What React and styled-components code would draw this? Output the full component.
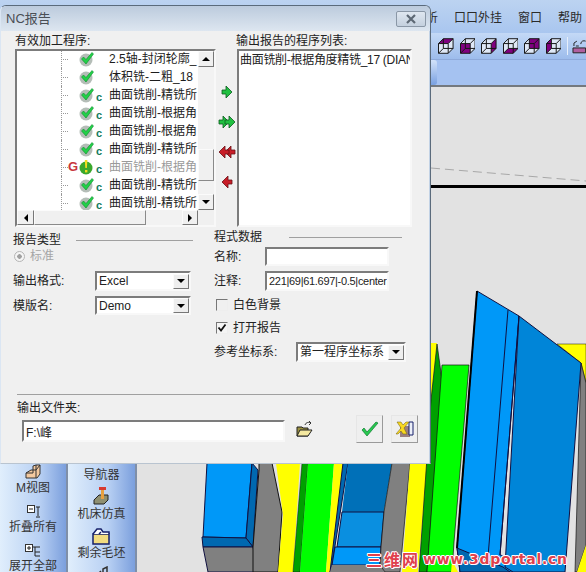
import styled, { createGlobalStyle } from "styled-components";

const GlobalStyle = createGlobalStyle`
  html, body { margin: 0; padding: 0; background: #e2e2e2; }
  * { box-sizing: border-box; }
`;

const FONT = `"Liberation Sans", "Noto Sans CJK SC", sans-serif`;

const Page = styled.div`
  position: relative;
  width: 586px;
  height: 572px;
  overflow: hidden;
  display: flex;
  flex-direction: column;
  font: 12px/16px ${FONT};
  color: #222;
`;

/* main window behind the dialog */
const MenuBar = styled.div`
  height: 33px;
  flex: none;
  display: flex;
  gap: 16px;
  padding: 10px 0 0 426px;
  color: #2a2a2a;
  background: linear-gradient(#bcd3f1, #a9c6ef);
`;

const MenuItem = styled.span`
  white-space: nowrap;
`;

const ToolBar = styled.div`
  height: 27px;
  flex: none;
  display: flex;
  align-items: center;
  gap: 6px;
  padding-left: 438px;
  background: linear-gradient(#c4d9f6, #9dbcec);
  border-bottom: 1px solid #8eaadb;
`;

const ToolSep = styled.div`
  width: 1px;
  height: 18px;
  background: #e6eefa;
  margin-right: -2px;
`;

const Band = styled.div`
  height: 27px;
  flex: none;
  padding-left: 431px;
  background: #a5c2f1;
  border-bottom: 2px solid #74797f;
`;

const BandButton = styled.div`
  width: 6px;
  height: 25px;
  border-radius: 0 3px 3px 0;
  background: linear-gradient(#d3e3fa, #79a0e0);
`;

const Workspace = styled.div`
  flex: 1;
  min-height: 0;
  display: flex;
`;

const SideColumn = styled.div`
  width: ${(p) => p.$w}px;
  flex: none;
  display: flex;
  flex-direction: column;
  align-items: center;
  overflow: hidden;
  padding-top: ${(p) => p.$top}px;
  background: linear-gradient(90deg, #e0eefc, #b8d0f3 60%, #7b9fdd);
  border-right: 2px solid #7f8fa8;
`;

const SideItem = styled.div`
  flex: none;
  height: 39px;
  display: flex;
  flex-direction: column;
  align-items: center;
  justify-content: flex-end;
  line-height: 15px;
  color: #333;
  white-space: nowrap;
  svg { margin-bottom: 1px; flex: none; }
`;

const PartialIcon = styled.svg`
  flex: none;
  margin-top: 5px;
`;

const Scene = styled.svg`
  flex: 1;
  min-width: 0;
  height: 100%;
  display: block;
  background: #e2e2e2;
`;

const Watermark = styled.div`
  position: absolute;
  left: 366px;
  top: 550px;
  display: flex;
  align-items: center;
  gap: 3px;
  white-space: nowrap;
  font: bold 14px/18px "DejaVu Sans", sans-serif;
  letter-spacing: 0.7px;
  color: #e0404c;
  text-shadow: 1px 0 #fff, -1px 0 #fff, 0 1px #fff, 0 -1px #fff, 1px 1px #fde, -1px -1px #fde;
`;

const WatermarkCjk = styled.span`
  font: bold 16px/18px "Noto Sans CJK SC", sans-serif;
  letter-spacing: 2px;
`;

/* dialog */
const Dialog = styled.div`
  position: absolute;
  left: 0;
  top: 5px;
  width: 431px;
  height: 459px;
  display: flex;
  flex-direction: column;
  background: #f0f0f0;
  border: 1px solid #5b6b7c;
  border-left-color: #dbe6f3;
  border-bottom-color: #b9c4d0;
  border-radius: 6px 6px 0 0;
  box-shadow: inset -1px 0 #c3d3e6;
`;

const TitleBar = styled.div`
  height: 25px;
  flex: none;
  display: flex;
  align-items: center;
  justify-content: space-between;
  padding: 0 4px 0 5px;
  font-size: 13px;
  color: #4a4f55;
  border-radius: 5px 5px 0 0;
  background: linear-gradient(#bccbdd, #dde6f0);
`;

const CloseButton = styled.div`
  width: 30px;
  height: 16px;
  display: flex;
  align-items: center;
  justify-content: center;
  border: 1px solid #8a97a6;
  border-radius: 2px;
  background: linear-gradient(#dfe7f0, #c4d0de);
`;

const ListsRow = styled.div`
  display: flex;
  padding: 2px 0 0 14px;
`;

const ListColumn = styled.div`
  width: ${(p) => p.$w}px;
  flex: none;
`;

const FieldLabel = styled.div`
  height: 16px;
  margin-left: ${(p) => p.$ml || 0}px;
  white-space: nowrap;
  overflow: hidden;
`;

const Inset = styled.div`
  border: 2px solid;
  border-color: #7c7c7c #f8f8f8 #f8f8f8 #7c7c7c;
  background: #fff;
`;

const TreeBox = styled(Inset)`
  height: 178px;
  display: grid;
  grid-template-columns: 1fr 16px;
  grid-template-rows: 159px 15px;
`;

const TreeRows = styled.div`
  overflow: hidden;
  padding-left: 44px;
`;

const TreeRow = styled.div`
  height: 18px;
  display: flex;
  align-items: center;
  white-space: nowrap;
  color: ${(p) => (p.$muted ? "#9a9a9a" : "#1c1c1c")};
  &:first-child { margin-top: -1px; }
`;

const Branch = styled.span`
  flex: none;
  width: 7px;
  height: 18px;
  position: relative;
  border-left: 1px dotted #999;
  &::after {
    content: "";
    position: absolute;
    left: 1px;
    top: 9px;
    width: 5px;
    border-top: 1px dotted #999;
  }
`;

const GSlot = styled.span`
  flex: none;
  width: 11px;
  font: bold 13px/16px "Liberation Sans", sans-serif;
  color: #c8363c;
`;

const StateSlot = styled.span`
  flex: none;
  width: 17px;
  height: 16px;
  display: flex;
`;

const CSlot = styled.span`
  flex: none;
  width: 13px;
  padding-top: 4px;
  font: bold 11px/12px "Liberation Sans", sans-serif;
  color: #0f7a5c;
`;

const ScrollColumn = styled.div`
  display: flex;
  flex-direction: column;
  background: #f2f2f2;
`;

const ScrollRow = styled.div`
  display: flex;
  background: #f2f2f2;
`;

const ScrollButton = styled.div`
  flex: none;
  width: ${(p) => p.$w || 16}px;
  height: ${(p) => p.$h || 16}px;
  display: flex;
  align-items: center;
  justify-content: center;
  background: #f0f0f0;
  border: 1px solid;
  border-color: #fbfbfb #777 #777 #fbfbfb;
`;

const ScrollThumb = styled.div`
  flex: none;
  width: ${(p) => p.$w || 16}px;
  height: ${(p) => p.$h || 15}px;
  margin-top: ${(p) => p.$top || 0}px;
  background: #f0f0f0;
  border: 1px solid;
  border-color: #fbfbfb #8a8a8a #8a8a8a #fbfbfb;
`;

const ScrollFill = styled.div`
  flex: 1;
`;

const Corner = styled.div`
  background: #f0f0f0;
`;

const Glyph = styled.span`
  width: 0;
  height: 0;
  border: 4px solid transparent;
  ${(p) => p.$dir === "up" && "border-bottom-color: #000; border-top-width: 0;"}
  ${(p) => p.$dir === "down" && "border-top-color: #000; border-bottom-width: 0;"}
  ${(p) => p.$dir === "left" && "border-right-color: #000; border-left-width: 0;"}
  ${(p) => p.$dir === "right" && "border-left-color: #000; border-right-width: 0;"}
`;

const ArrowColumn = styled.div`
  width: 21px;
  flex: none;
  display: flex;
  flex-direction: column;
  align-items: center;
  gap: 16px;
  padding-top: 52px;
`;

const ListText = styled.div`
  padding: 1px 0 0 1px;
  letter-spacing: -0.3px;
  white-space: nowrap;
`;

const OutputBox = styled(Inset)`
  height: 178px;
  overflow: hidden;
`;

const Panes = styled.div`
  display: flex;
  height: 167px;
  flex: none;
  padding-left: 12px;
`;

const LeftPane = styled.div`
  width: 201px;
  flex: none;
  display: flex;
  flex-direction: column;
  padding-top: 5px;
`;

const RightPane = styled.div`
  width: 192px;
  flex: none;
  display: flex;
  flex-direction: column;
  padding-top: 2px;
`;

const Heading = styled.div`
  display: flex;
  align-items: center;
  gap: ${(p) => p.$gap}px;
  height: 16px;
  margin-bottom: ${(p) => p.$mb || 0}px;
  white-space: nowrap;
`;

const Rule = styled.div`
  flex: 0 0 ${(p) => p.$w}px;
  height: 1px;
  background: #a0a0a0;
`;

const RadioRow = styled.div`
  display: flex;
  align-items: center;
  gap: 5px;
  height: 16px;
  margin: 0 0 7px 1px;
  color: #a6a6a6;
`;

const Radio = styled.span`
  width: 11px;
  height: 11px;
  border-radius: 50%;
  border: 1px solid #b5b5b5;
  background: radial-gradient(circle, #a0a0a0 0 2px, #f4f4f4 2.5px);
`;

const FormRow = styled.div`
  display: flex;
  align-items: center;
  height: ${(p) => p.$h}px;
  margin-bottom: ${(p) => p.$mb || 0}px;
  white-space: nowrap;
`;

const RowLabel = styled.span`
  flex: none;
  width: ${(p) => p.$w}px;
`;

const SelectBox = styled(Inset)`
  width: ${(p) => p.$w}px;
  height: ${(p) => p.$h || 20}px;
  display: flex;
  align-items: center;
  justify-content: space-between;
  padding-left: 2px;
  overflow: hidden;
`;

const SelectArrow = styled.div`
  flex: none;
  width: 16px;
  height: 15px;
  display: flex;
  align-items: center;
  justify-content: center;
  background: #eee;
  border: 1px solid;
  border-color: #fbfbfb #777 #777 #fbfbfb;
`;

const TextInput = styled.input`
  flex: none;
  width: ${(p) => p.$w}px;
  height: ${(p) => p.$h}px;
  margin-left: ${(p) => p.$ml || 0}px;
  padding: 0 0 0 2px;
  font: ${(p) => (p.$small ? 11 : 12)}px ${FONT};
  letter-spacing: ${(p) => (p.$small ? "-0.3px" : 0)};
  color: #222;
  background: #fff;
  outline: none;
  border: 2px solid;
  border-color: #7c7c7c #f8f8f8 #f8f8f8 #7c7c7c;
`;

const CheckRow = styled.div`
  display: flex;
  align-items: center;
  gap: 5px;
  height: 16px;
  margin: 0 0 ${(p) => p.$mb}px 2px;
`;

const CheckBox = styled.span`
  width: 12px;
  height: 12px;
  display: flex;
  background: ${(p) => (p.$on ? "#f4f4f4" : "#f0f0f0")};
  border: 1px solid;
  border-color: #777 #eee #eee #777;
`;

const Footer = styled.div`
  margin: 0 20px 0 16px;
  padding-top: 5px;
  border-top: 1px solid #a0a0a0;
`;

const FolderRow = styled.div`
  display: flex;
  align-items: flex-start;
  margin-top: 4px;
`;

const FolderIconWrap = styled.div`
  width: 71px;
  padding: 1px 0 0 11px;
  flex: none;
`;

const ActionButton = styled.div`
  flex: none;
  width: 27px;
  height: 28px;
  margin: -5px 8px 0 0;
  display: flex;
  align-items: center;
  justify-content: center;
  background: #efefef;
  border: 1px solid;
  border-color: #e6e6e6 #9a9a9a #9a9a9a #e6e6e6;
`;

const CUBE_FACES = {
  top: "M.5 5.500L5.500.5h10l-5 5z",
  front: "M.5 5.500h10v10H.5z",
  right: "M10.500 5.500l5-5v10l-5 5z",
  bottom: "M.5 15.500l5-5h10l-5 5z",
  back: "M5.500.5h10v10h-10z",
  left: "M.5 5.500L5.500.5v10l-5 5z",
};

function Cube({ face }) {
  return (
    <svg width="16" height="16" viewBox="0 0 16 16">
      <path d="M.5 5.500L5.500.5h10v10l-5 5H.5z" fill="#dfe8f6" />
      <path d={CUBE_FACES[face]} fill="#800080" />
      <path
        d="M.5 5.500L5.500.5h10v10l-5 5H.5zM.5 5.500h10v10M10.500 5.500l5-5M5.500.5v10h10M5.500 10.500l-5 5"
        fill="none"
        stroke="#151515"
      />
    </svg>
  );
}

function CheckMark() {
  return (
    <svg width="16" height="16" viewBox="0 0 16 16">
      <circle cx="7" cy="9" r="6.500" fill="#b4bdb7" />
      <path d="M2.500 8l2-2 2.500 2.500L13 1.500l1.500 1.500L7 13z" fill="#22d048" stroke="#0d8a2c" strokeWidth=".6" />
    </svg>
  );
}

function WarnMark() {
  return (
    <svg width="16" height="16" viewBox="0 0 16 16">
      <circle cx="7" cy="9" r="6.500" fill="#3aa82c" />
      <path d="M5.800 1h2.600l-.5 8H6.300z" fill="#f2dc20" />
      <rect x="6" y="11" width="2.400" height="2.400" fill="#f2dc20" />
    </svg>
  );
}

function MoveArrow({ color, edge, flip, double }) {
  const shape = "M0 4h4V0l6 6-6 6V8H0z";
  return (
    <svg width="18" height="14" viewBox="0 0 18 14" style={flip ? { transform: "scaleX(-1)" } : undefined}>
      <path d={shape} transform={double ? "translate(1 1)" : "translate(4 1)"} fill={color} stroke={edge} strokeWidth=".8" />
      {double && <path d={shape} transform="translate(7 1)" fill={color} stroke={edge} strokeWidth=".8" />}
    </svg>
  );
}

function Scene3D() {
  return (
    <Scene viewBox="137 87 449 485">
      <path d="M431 168L586 181" stroke="#a8a8a8" strokeDasharray="9 5" fill="none" />
      <rect x="431" y="185" width="155" height="3" fill="#000" />

      <g stroke="#101040" strokeWidth="1">
        <path d="M207 463h45l-6 75-43-1z" fill="#0098f8" />
        <path d="M252 463l6 7-5 77-7-9z" fill="#0068b0" />
        <path d="M202 537l44 1 7 9h-50z" fill="#0068b0" />
        <path d="M203 547h50l4 25h-49z" fill="#808080" />
      </g>
      <path d="M259 463h13l10 49-4 60h-25l0-25 6-77z" fill="#808080" stroke="#111" />
      <path d="M276 463h24l-7 109h-15l5-57z" fill="#ffff00" />
      <path d="M302 463h6l-8 109h-7z" fill="#00a000" stroke="#111" strokeWidth=".5" />
      <path d="M308 463h26l-8 109h-26z" fill="#00ff00" />
      <path d="M334 463h9l-13 109h-4z" fill="#ffff00" />
      <path d="M343 463h5l-16 102-2 7z" fill="#0068b0" stroke="#101040" />
      <path d="M348 463h44l-8 49h-42z" fill="#0070b8" />
      <path d="M342 512h42l-3 35h-44z" fill="#0a8fe0" stroke="#101040" />
      <path d="M335 547h46l-1 18h-48z" fill="#0098f8" stroke="#101040" />
      <path d="M332 565h48l5 7h-55z" fill="#808080" />
      <path d="M392 463h18l-10 109h-15l-5-7 1-18 3-35z" fill="#808080" stroke="#111" strokeWidth=".7" />
      <path d="M410 463h17l-9 109h-16z" fill="#ffff00" />

      <path d="M431 343h6l-6 57z" fill="#ffff00" />
      <path d="M437 344l5 36-15 192h-8l12-172z" fill="#00a000" stroke="#111" strokeWidth=".7" />
      <path d="M442 365h27l-15 177-2 30h-25z" fill="#00ff00" stroke="#111" strokeWidth=".7" />
      <path d="M452 560l6 12h-7z" fill="#ffff00" />
      <path d="M557 344h29v39l-5-20z" fill="#ffff00" stroke="#111" strokeWidth=".5" />
      <path d="M581 363l5 20v162l-9 27h-2z" fill="#808080" stroke="#111" strokeWidth=".7" />
      <path d="M586 545v27h-9z" fill="#ffff00" />

      <path d="M477 291l42 25-19 239 65 17h-105l-3-24z" fill="#0098f8" stroke="#101040" />
      <path d="M519 316l62 47-16 209h-52l-8-5z" fill="#0085d8" stroke="#101040" />
      <path d="M508 310l-20 247M519 316l-19 239" stroke="#101040" fill="none" />
      <path d="M457 548l46 19 7 5h-50z" fill="#0068b0" stroke="#101040" />
      <path d="M477 291l-20 257" stroke="#000" strokeWidth="2" fill="none" />
    </Scene>
  );
}

function TreeItem({ text, status = "ok", code, gcode, muted }) {
  return (
    <TreeRow $muted={muted}>
      <Branch />
      <GSlot>{gcode && "G"}</GSlot>
      <StateSlot>{status === "ok" ? <CheckMark /> : <WarnMark />}</StateSlot>
      <CSlot>{code && "c"}</CSlot>
      {text}
    </TreeRow>
  );
}

export default function App() {
  return (
    <Page>
      <GlobalStyle />

      <MenuBar>
        <MenuItem>析</MenuItem>
        <MenuItem>口口外挂</MenuItem>
        <MenuItem>窗口</MenuItem>
        <MenuItem>帮助</MenuItem>
      </MenuBar>
      <ToolBar>
        <Cube face="top" />
        <Cube face="front" />
        <Cube face="right" />
        <Cube face="bottom" />
        <Cube face="back" />
        <Cube face="left" />
        <ToolSep />
        <svg width="14" height="16" viewBox="0 0 14 16">
          <path d="M1 10h13v5H1z" fill="#b060a0" stroke="#222" />
          <path d="M2 8V5l3-2M4 8h3M9 6c0-3 3-4 5-3" fill="none" stroke="#222" />
        </svg>
      </ToolBar>
      <Band>
        <BandButton />
      </Band>

      <Workspace>
        <SideColumn $w={68} $top={370}>
          <SideItem>
            <svg width="16" height="16" viewBox="0 0 16 16">
              <path d="M1 14V9l5-3h2V2l3-1h4v9l-3 4z" fill="#f3c9a0" stroke="#333" />
              <path d="M8 6h3V1M11 6l4-5M11 6v8M1 9h7V6" fill="none" stroke="#333" />
            </svg>
            M视图
          </SideItem>
          <SideItem>
            <svg width="16" height="14" viewBox="0 0 16 14">
              <rect x="2.500" y=".5" width="7" height="7" fill="#fff" stroke="#333" />
              <path d="M4 4h4M11 2h4M13 2v9M11 12h4" stroke="#222" fill="none" />
            </svg>
            折叠所有
          </SideItem>
          <SideItem>
            <svg width="18" height="14" viewBox="0 0 18 14">
              <rect x="1.500" y=".5" width="7" height="7" fill="#fff" stroke="#333" />
              <path d="M3 4h4M5 2v4M9 3h7M11 3v9h5M11 8h5" stroke="#222" fill="none" />
            </svg>
            展开全部
          </SideItem>
        </SideColumn>
        <SideColumn $w={69} $top={357}>
          <SideItem>
            <svg width="16" height="16" viewBox="0 0 16 16">
              <path d="M2 4h12M2 8h12M5 1v10M11 1v10" stroke="#333" fill="none" />
            </svg>
            导航器
          </SideItem>
          <SideItem>
            <svg width="20" height="20" viewBox="0 0 20 20">
              <path d="M3 14l5-5h9v5l-4 4H3z" fill="#8f8f70" stroke="#222" />
              <rect x="8" y="1" width="7" height="3" fill="#d83a30" />
              <path d="M11.500 4v9" stroke="#e8a040" strokeWidth="3" />
            </svg>
            机床仿真
          </SideItem>
          <SideItem>
            <svg width="20" height="18" viewBox="0 0 20 18">
              <path d="M2 7h16v10H2z" fill="#f2dc80" stroke="#16206a" strokeWidth="1.500" />
              <path d="M2 7l4-5h4l2 3h6v2M8 7l2-2" fill="#fff" stroke="#16206a" strokeWidth="1.500" />
            </svg>
            剩余毛坯
          </SideItem>
          <PartialIcon width="16" height="12" viewBox="0 0 16 12">
            <path d="M2 10l5-5M9 10V3l4-2v9" fill="none" stroke="#333" strokeWidth="1.500" />
          </PartialIcon>
        </SideColumn>
        <Scene3D />
      </Workspace>

      <Watermark>
        <WatermarkCjk>三维网</WatermarkCjk>
        www.3dportal.cn
      </Watermark>

      <Dialog>
        <TitleBar>
          NC报告
          <CloseButton>
            <svg width="12" height="10" viewBox="0 0 12 10">
              <path d="M2 1l8 8M10 1L2 9" stroke="#5d6874" strokeWidth="2.200" fill="none" />
            </svg>
          </CloseButton>
        </TitleBar>

        <ListsRow>
          <ListColumn $w={201}>
            <FieldLabel>有效加工程序:</FieldLabel>
            <TreeBox>
              <TreeRows>
                <TreeItem text="2.5轴-封闭轮廓_" />
                <TreeItem text="体积铣-二粗_18" />
                <TreeItem code text="曲面铣削-精铣所" />
                <TreeItem code text="曲面铣削-根据角" />
                <TreeItem code text="曲面铣削-根据角" />
                <TreeItem code text="曲面铣削-精铣所" />
                <TreeItem code gcode muted status="warn" text="曲面铣削-根据角" />
                <TreeItem code text="曲面铣削-精铣所" />
                <TreeItem code text="曲面铣削-精铣所" />
              </TreeRows>
              <ScrollColumn>
                <ScrollButton><Glyph $dir="up" /></ScrollButton>
                <ScrollThumb $h={32} $top={82} />
                <ScrollFill />
                <ScrollButton><Glyph $dir="down" /></ScrollButton>
              </ScrollColumn>
              <ScrollRow>
                <ScrollButton $h={15} $w={17}><Glyph $dir="left" /></ScrollButton>
                <ScrollThumb $w={112} />
                <ScrollFill />
                <ScrollButton $h={15}><Glyph $dir="right" /></ScrollButton>
              </ScrollRow>
              <Corner />
            </TreeBox>
          </ListColumn>

          <ArrowColumn>
            <MoveArrow color="#20c040" edge="#0c5a20" />
            <MoveArrow color="#20c040" edge="#0c5a20" double />
            <MoveArrow color="#c81e28" edge="#6a1014" flip double />
            <MoveArrow color="#c81e28" edge="#6a1014" flip />
          </ArrowColumn>

          <ListColumn $w={175}>
            <FieldLabel $ml={-1}>输出报告的程序列表:</FieldLabel>
            <OutputBox>
              <ListText>曲面铣削-根据角度精铣_17 (DIAN</ListText>
            </OutputBox>
          </ListColumn>
        </ListsRow>

        <Panes>
          <LeftPane>
            <Heading $gap={15}>
              报告类型
              <Rule $w={117} />
            </Heading>
            <RadioRow>
              <Radio />
              标准
            </RadioRow>
            <FormRow $h={20} $mb={5}>
              <RowLabel $w={82}>输出格式:</RowLabel>
              <SelectBox $w={96}>
                Excel
                <SelectArrow><Glyph $dir="down" /></SelectArrow>
              </SelectBox>
            </FormRow>
            <FormRow $h={19}>
              <RowLabel $w={82}>模版名:</RowLabel>
              <SelectBox $w={96} $h={19}>
                Demo
                <SelectArrow><Glyph $dir="down" /></SelectArrow>
              </SelectBox>
            </FormRow>
          </LeftPane>

          <RightPane>
            <Heading $gap={27} $mb={2}>
              程式数据
              <Rule $w={113} />
            </Heading>
            <FormRow $h={19} $mb={5}>
              <RowLabel $w={51}>名称:</RowLabel>
              <TextInput $w={124} $h={19} readOnly value="" />
            </FormRow>
            <FormRow $h={20} $mb={6}>
              <RowLabel $w={51}>注释:</RowLabel>
              <TextInput $w={124} $h={20} $small readOnly value="221|69|61.697|-0.5|center" />
            </FormRow>
            <CheckRow $mb={7}>
              <CheckBox />
              白色背景
            </CheckRow>
            <CheckRow $mb={6}>
              <CheckBox $on>
                <svg width="10" height="10" viewBox="0 0 10 10">
                  <path d="M1.500 4.500l2.500 3 4.500-6" fill="none" stroke="#111" strokeWidth="1.800" />
                </svg>
              </CheckBox>
              打开报告
            </CheckRow>
            <FormRow $h={20}>
              <RowLabel $w={82}>参考坐标系:</RowLabel>
              <SelectBox $w={111}>
                第一程序坐标系
                <SelectArrow><Glyph $dir="down" /></SelectArrow>
              </SelectBox>
            </FormRow>
          </RightPane>
        </Panes>

        <Footer>
          <FieldLabel>输出文件夹:</FieldLabel>
          <FolderRow>
            <TextInput $w={263} $h={22} $ml={5} readOnly value="F:\峰" />
            <FolderIconWrap>
              <svg width="17" height="16" viewBox="0 0 17 16">
                <path d="M1 6h5l1 1h5v8H1z" fill="#9a9040" stroke="#222" />
                <path d="M1 15l3-6h12l-4 6z" fill="#f4e8a0" stroke="#222" />
                <path d="M9 4c1-3 4-3 6-2M13 0l2 2-2 2" fill="none" stroke="#333" />
              </svg>
            </FolderIconWrap>
            <ActionButton>
              <svg width="20" height="18" viewBox="0 0 20 18">
                <path d="M2 10l5 6L18 3l-2-1L7 12 4 8z" fill="#28c850" stroke="#0e7a30" strokeWidth=".7" />
              </svg>
            </ActionButton>
            <ActionButton>
              <svg width="20" height="18" viewBox="0 0 20 18">
                <path d="M5 6h10v11H5z" fill="#9a7f80" />
                <path d="M14 2h4v13h-4z" fill="#eceff8" stroke="#16206a" />
                <path d="M2 2h4l2 3 3-3h3L9 8l3 6H8L6 11l-3 3H1l5-6z" fill="#f8d820" stroke="#6a5a10" strokeWidth=".5" />
              </svg>
            </ActionButton>
          </FolderRow>
        </Footer>
      </Dialog>
    </Page>
  );
}
